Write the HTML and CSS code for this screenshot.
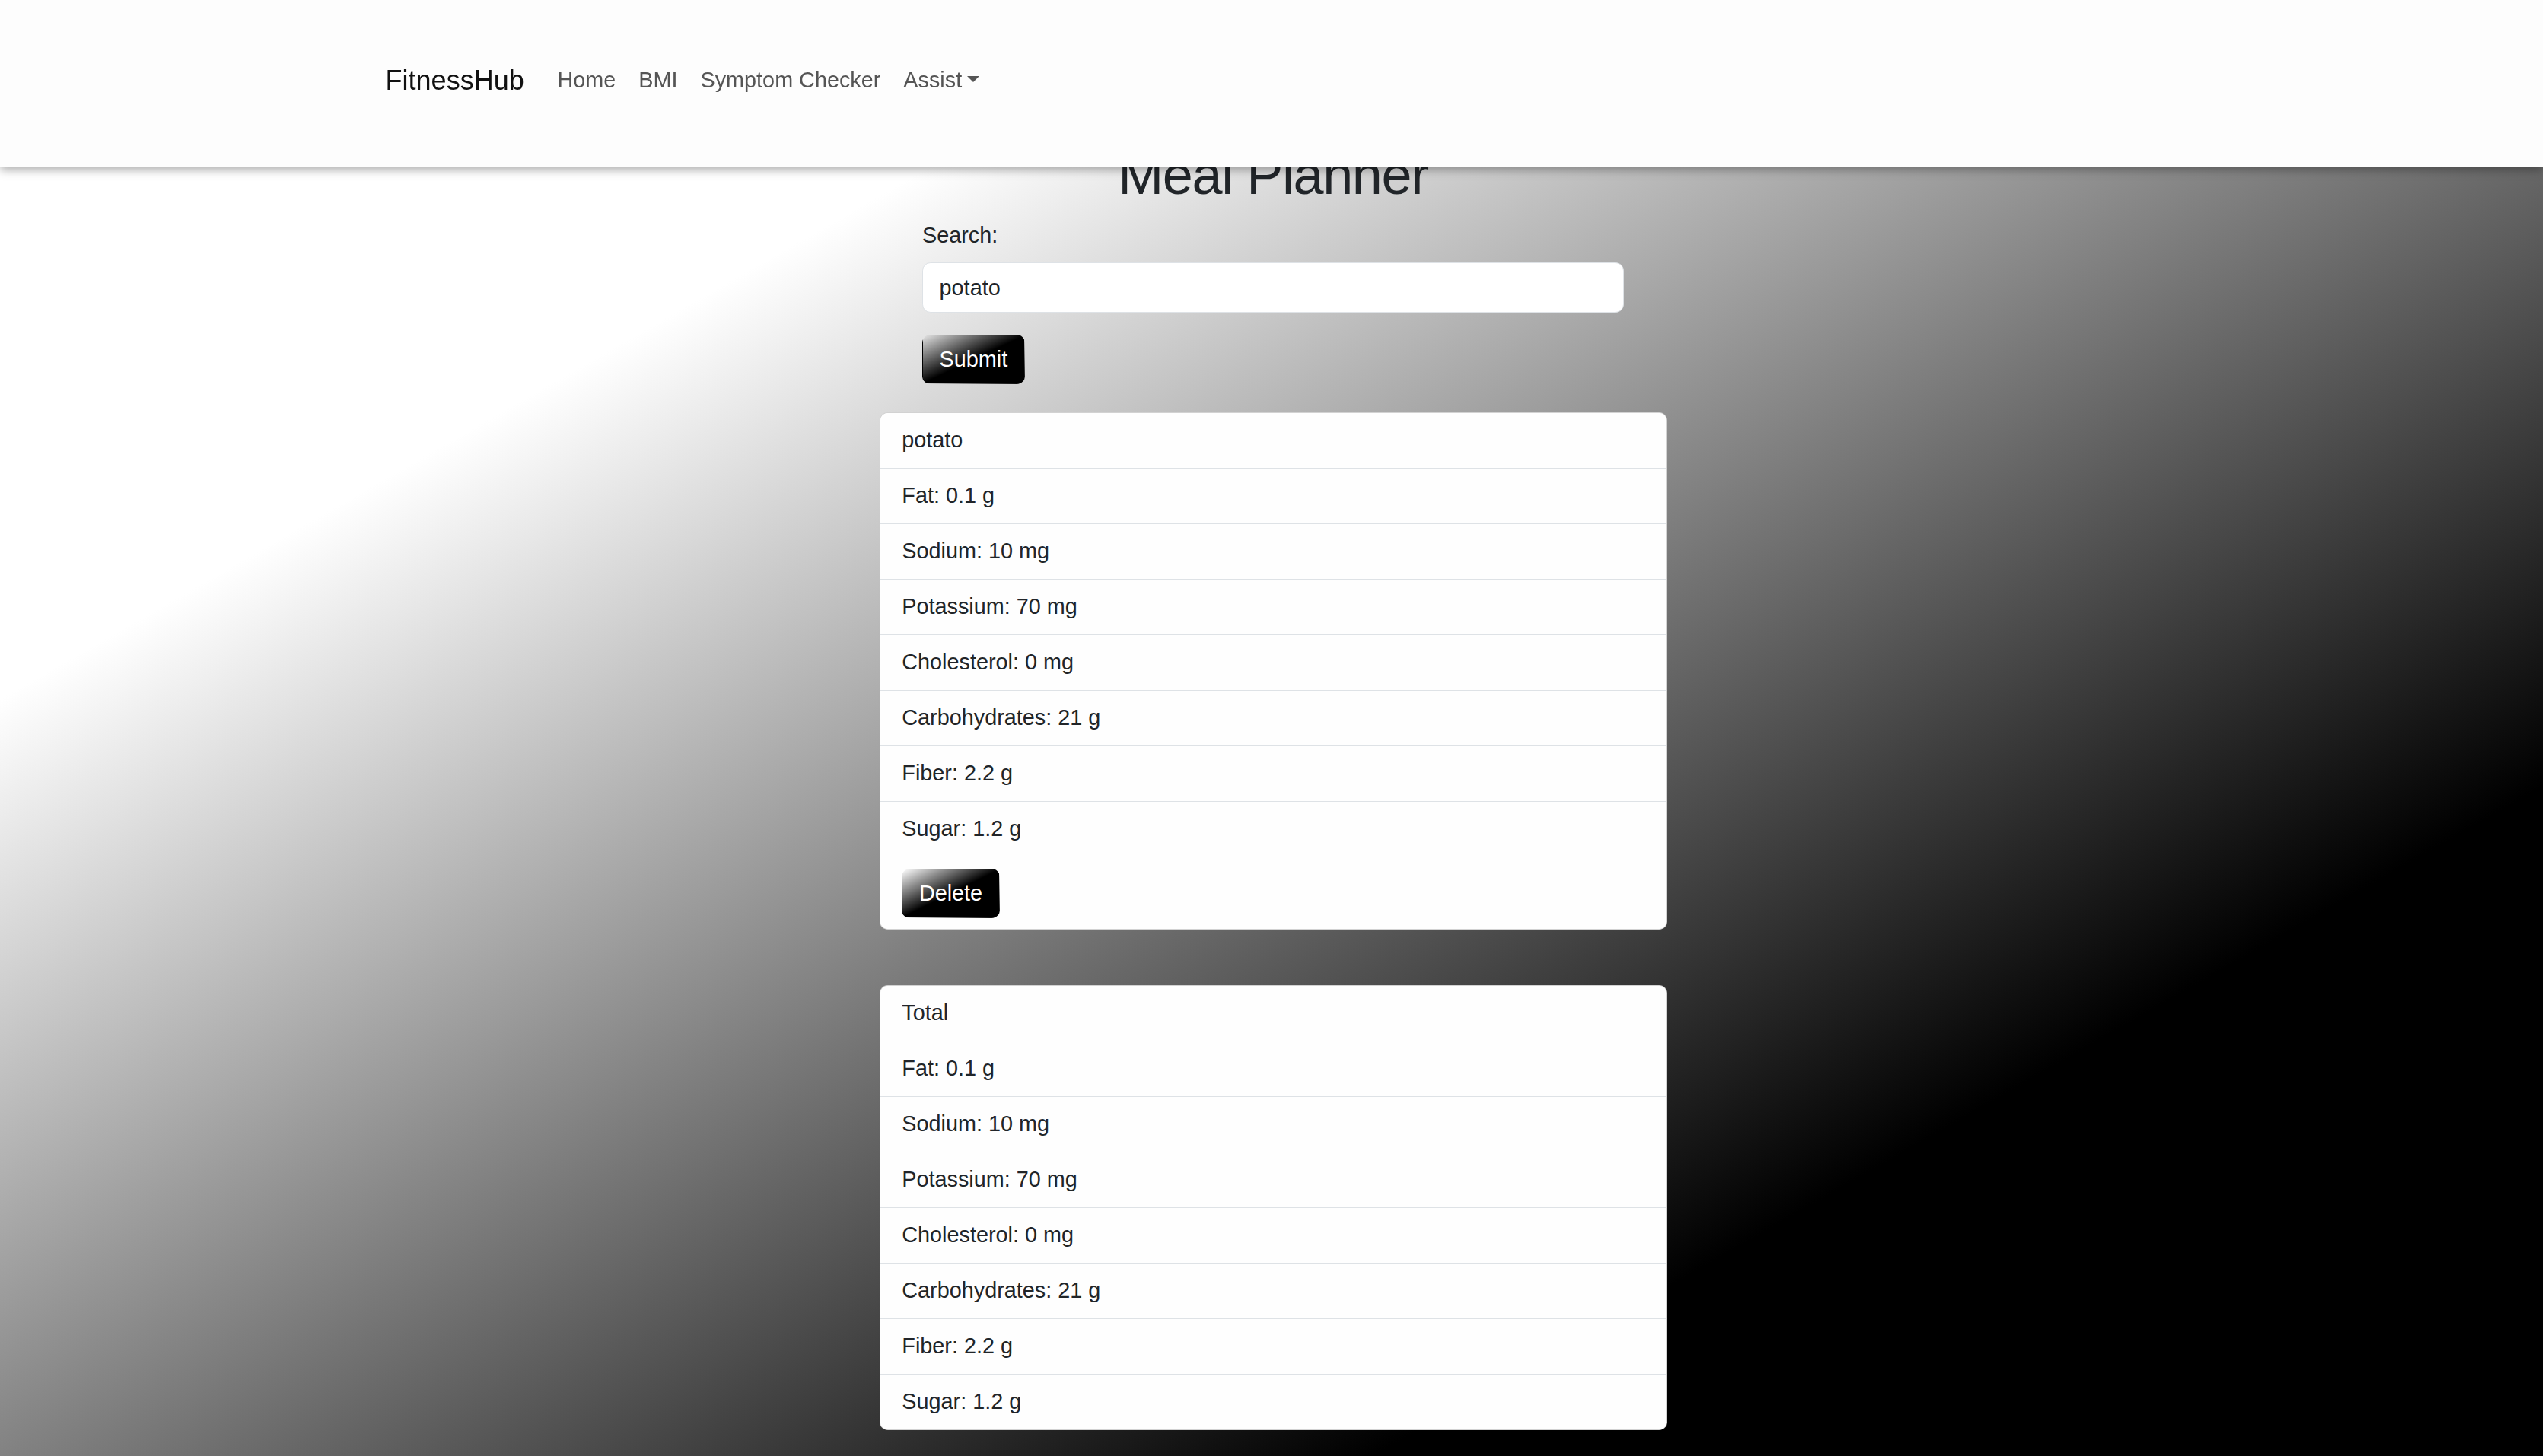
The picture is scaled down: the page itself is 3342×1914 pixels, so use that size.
FILE: index.html
```html
<!DOCTYPE html>
<html lang="en">
<head>
<meta charset="utf-8">
<title>FitnessHub - Meal Planner</title>
<link rel="stylesheet" href="styles.css">
</head>
<body>
<nav class="navbar">
  <div class="nav-inner">
    <a class="brand" href="#">FitnessHub</a>
    <ul class="nav-links">
      <li><a class="nav-link" href="#">Home</a></li>
      <li><a class="nav-link" href="#">BMI</a></li>
      <li><a class="nav-link" href="#">Symptom Checker</a></li>
      <li><a class="nav-link dropdown-toggle" href="#">Assist</a></li>
    </ul>
  </div>
</nav>

<main class="page">
  <h1 class="title">Meal Planner</h1>

  <form class="search-form">
    <label class="form-label" for="search">Search:</label>
    <input class="form-control" id="search" type="text" value="potato">
    <button class="btn-grad" type="button">Submit</button>
  </form>

  <div class="card">
    <ul class="list">
      <li class="item">potato</li>
      <li class="item">Fat: 0.1 g</li>
      <li class="item">Sodium: 10 mg</li>
      <li class="item">Potassium: 70 mg</li>
      <li class="item">Cholesterol: 0 mg</li>
      <li class="item">Carbohydrates: 21 g</li>
      <li class="item">Fiber: 2.2 g</li>
      <li class="item">Sugar: 1.2 g</li>
      <li class="item item-action"><button class="btn-grad" type="button">Delete</button></li>
    </ul>
  </div>

  <div class="card card-total">
    <ul class="list">
      <li class="item">Total</li>
      <li class="item">Fat: 0.1 g</li>
      <li class="item">Sodium: 10 mg</li>
      <li class="item">Potassium: 70 mg</li>
      <li class="item">Cholesterol: 0 mg</li>
      <li class="item">Carbohydrates: 21 g</li>
      <li class="item">Fiber: 2.2 g</li>
      <li class="item">Sugar: 1.2 g</li>
    </ul>
  </div>
</main>
</body>
</html>
```

FILE: styles.css
```css
* {
  box-sizing: border-box;
}

html, body {
  margin: 0;
  padding: 0;
}

body {
  min-height: 100vh;
  font-family: "Liberation Sans", Arial, sans-serif;
  font-size: 28.8px;
  line-height: 43.2px;
  color: #212529;
  background: linear-gradient(to bottom right, #ffffff 24%, #000000 77%);
  background-attachment: fixed;
}

/* ---------- navbar ---------- */
.navbar {
  position: fixed;
  top: 0;
  left: 0;
  right: 0;
  height: 220px;
  background: #fdfdfd;
  box-shadow: 0 3px 12px rgba(0, 0, 0, 0.35);
  z-index: 10;
}

.nav-inner {
  width: 2376px;
  height: 100%;
  margin: 0 auto;
  padding: 0 21.6px 8px 23.6px;
  display: flex;
  align-items: center;
}

.brand {
  font-size: 36px;
  line-height: 54px;
  padding: 9px 0;
  margin-right: 28.8px;
  color: #111;
  text-decoration: none;
}

.nav-links {
  display: flex;
  list-style: none;
  margin: 0;
  padding: 0;
}

.nav-link {
  display: block;
  padding: 14.4px 15px;
  color: #555;
  text-decoration: none;
}

.dropdown-toggle::after {
  content: "";
  display: inline-block;
  margin-left: 7.3px;
  vertical-align: 7.3px;
  border-top: 8.64px solid #555;
  border-left: 8.64px solid transparent;
  border-right: 8.64px solid transparent;
  border-bottom: 0;
}

/* ---------- page ---------- */
.page {
  padding: 187px 0 40px 4px;
}

.title {
  margin: 0 0 14.4px;
  text-align: center;
  font-size: 72px;
  line-height: 86.4px;
  font-weight: 500;
  letter-spacing: -1.4px;
  color: #212529;
}

.search-form {
  width: 922px;
  margin: 0 auto;
}

.form-label {
  display: block;
  margin-bottom: 14.4px;
}

.form-control {
  display: block;
  width: 100%;
  height: 66px;
  margin: 0 0 28.8px;
  padding: 10.8px 21.6px;
  font-family: inherit;
  font-size: 28.8px;
  line-height: 43.2px;
  color: #212529;
  background: #fff;
  border: 1px solid #dee2e6;
  border-radius: 10.8px;
}

.btn-grad {
  display: inline-block;
  padding: 10px 21.6px;
  font-family: inherit;
  font-size: 28.8px;
  line-height: 43.2px;
  color: #fff;
  border: 1px solid transparent;
  border-radius: 10.8px;
  background: linear-gradient(to bottom right, rgba(0, 0, 0, 0) 0%, #000 50%);
  cursor: pointer;
}

.card {
  width: 1035px;
  margin: 36.5px auto 0;
  background: #fff;
  border: 1px solid rgba(0, 0, 0, 0.175);
  border-radius: 10.8px;
  overflow: hidden;
}

.card-total {
  margin-top: 73px;
}

.list {
  list-style: none;
  margin: 0;
  padding: 0;
}

.item {
  padding: 14.4px 28.8px;
  border-bottom: 1px solid #dee2e6;
  background: #fefefe;
}

.item:last-child {
  border-bottom: 0;
}

.item-action {
  padding-top: 15.4px;
  padding-bottom: 13.4px;
}
```
